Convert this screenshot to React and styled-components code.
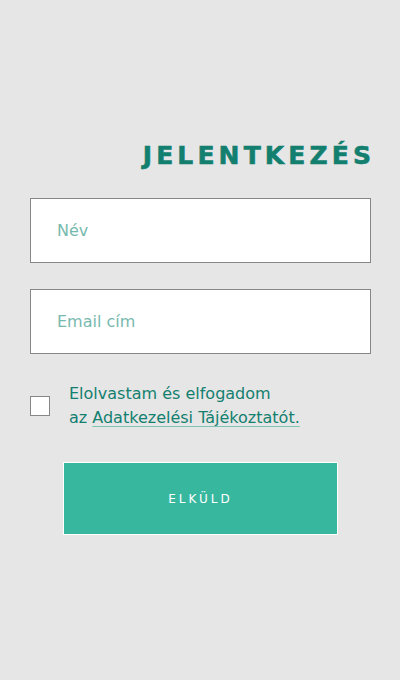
import styled, { createGlobalStyle } from 'styled-components'

/*---> Global <---*/
const GlobalStyle = createGlobalStyle`
  html, body {
    margin: 0;
    padding: 0;
    background: #e6e6e6;
  }
  * { box-sizing: border-box; }
`

/*---> Component <---*/
export default function App() {
  return (
    <>
      <GlobalStyle />
      <Page>
        <Title>Jelentkezés</Title>
        <Form onSubmit={(e) => e.preventDefault()}>
          <Field placeholder="Név" />
          <Field placeholder="Email cím" type="email" />
          <ConsentRow>
            <Box type="checkbox" />
            <ConsentText>
              Elolvastam és elfogadom
              <br />
              az <Link href="#">Adatkezelési Tájékoztatót.</Link>
            </ConsentText>
          </ConsentRow>
          <Submit type="submit">Elküld</Submit>
        </Form>
      </Page>
    </>
  )
}

/*---> Styles <---*/
const Page = styled.div`
  width: 400px;
  min-height: 680px;
  padding: 141px 29px 0 30px;
  font-family: "DejaVu Sans", "Noto Sans", sans-serif;
`

const Title = styled.h1`
  margin: 0 0 27px;
  text-align: right;
  text-transform: uppercase;
  font-family: "DejaVu Sans", sans-serif;
  font-weight: 700;
  font-size: 25px;
  line-height: 30px;
  letter-spacing: 0.165em;
  margin-right: -0.165em;
  color: #137f6f;
  -webkit-text-stroke: 0.6px #137f6f;
`

const Form = styled.form`
  display: flex;
  flex-direction: column;
`

const Field = styled.input`
  width: 341px;
  height: 65px;
  margin-bottom: 26px;
  padding: 0 26px;
  border: 1px solid #878787;
  background: #fff;
  font-family: "DejaVu Sans", sans-serif;
  font-size: 16px;
  color: #137f6f;
  outline: none;

  &::placeholder {
    color: #78b9ae;
  }
`

const ConsentRow = styled.label`
  display: flex;
  align-items: center;
  gap: 19px;
  margin-top: 2px;
`

const Box = styled.input`
  appearance: none;
  width: 20px;
  height: 20px;
  margin: 0;
  flex-shrink: 0;
  border: 1px solid #878787;
  background: #fff;
`

const ConsentText = styled.span`
  font-size: 16px;
  line-height: 24px;
  color: #137f6f;
`

const Link = styled.a`
  color: #137f6f;
  text-decoration: underline;
  text-decoration-color: #7cc2b5;
  text-underline-offset: 3px;
`

const Submit = styled.button`
  align-self: flex-start;
  width: 275px;
  height: 73px;
  margin: 32px 0 0 33px;
  border: 1px solid #fff;
  background: #38b79f;
  color: #fff;
  font-family: "DejaVu Sans", sans-serif;
  font-size: 12px;
  letter-spacing: 0.25em;
  text-transform: uppercase;
  cursor: pointer;
`
